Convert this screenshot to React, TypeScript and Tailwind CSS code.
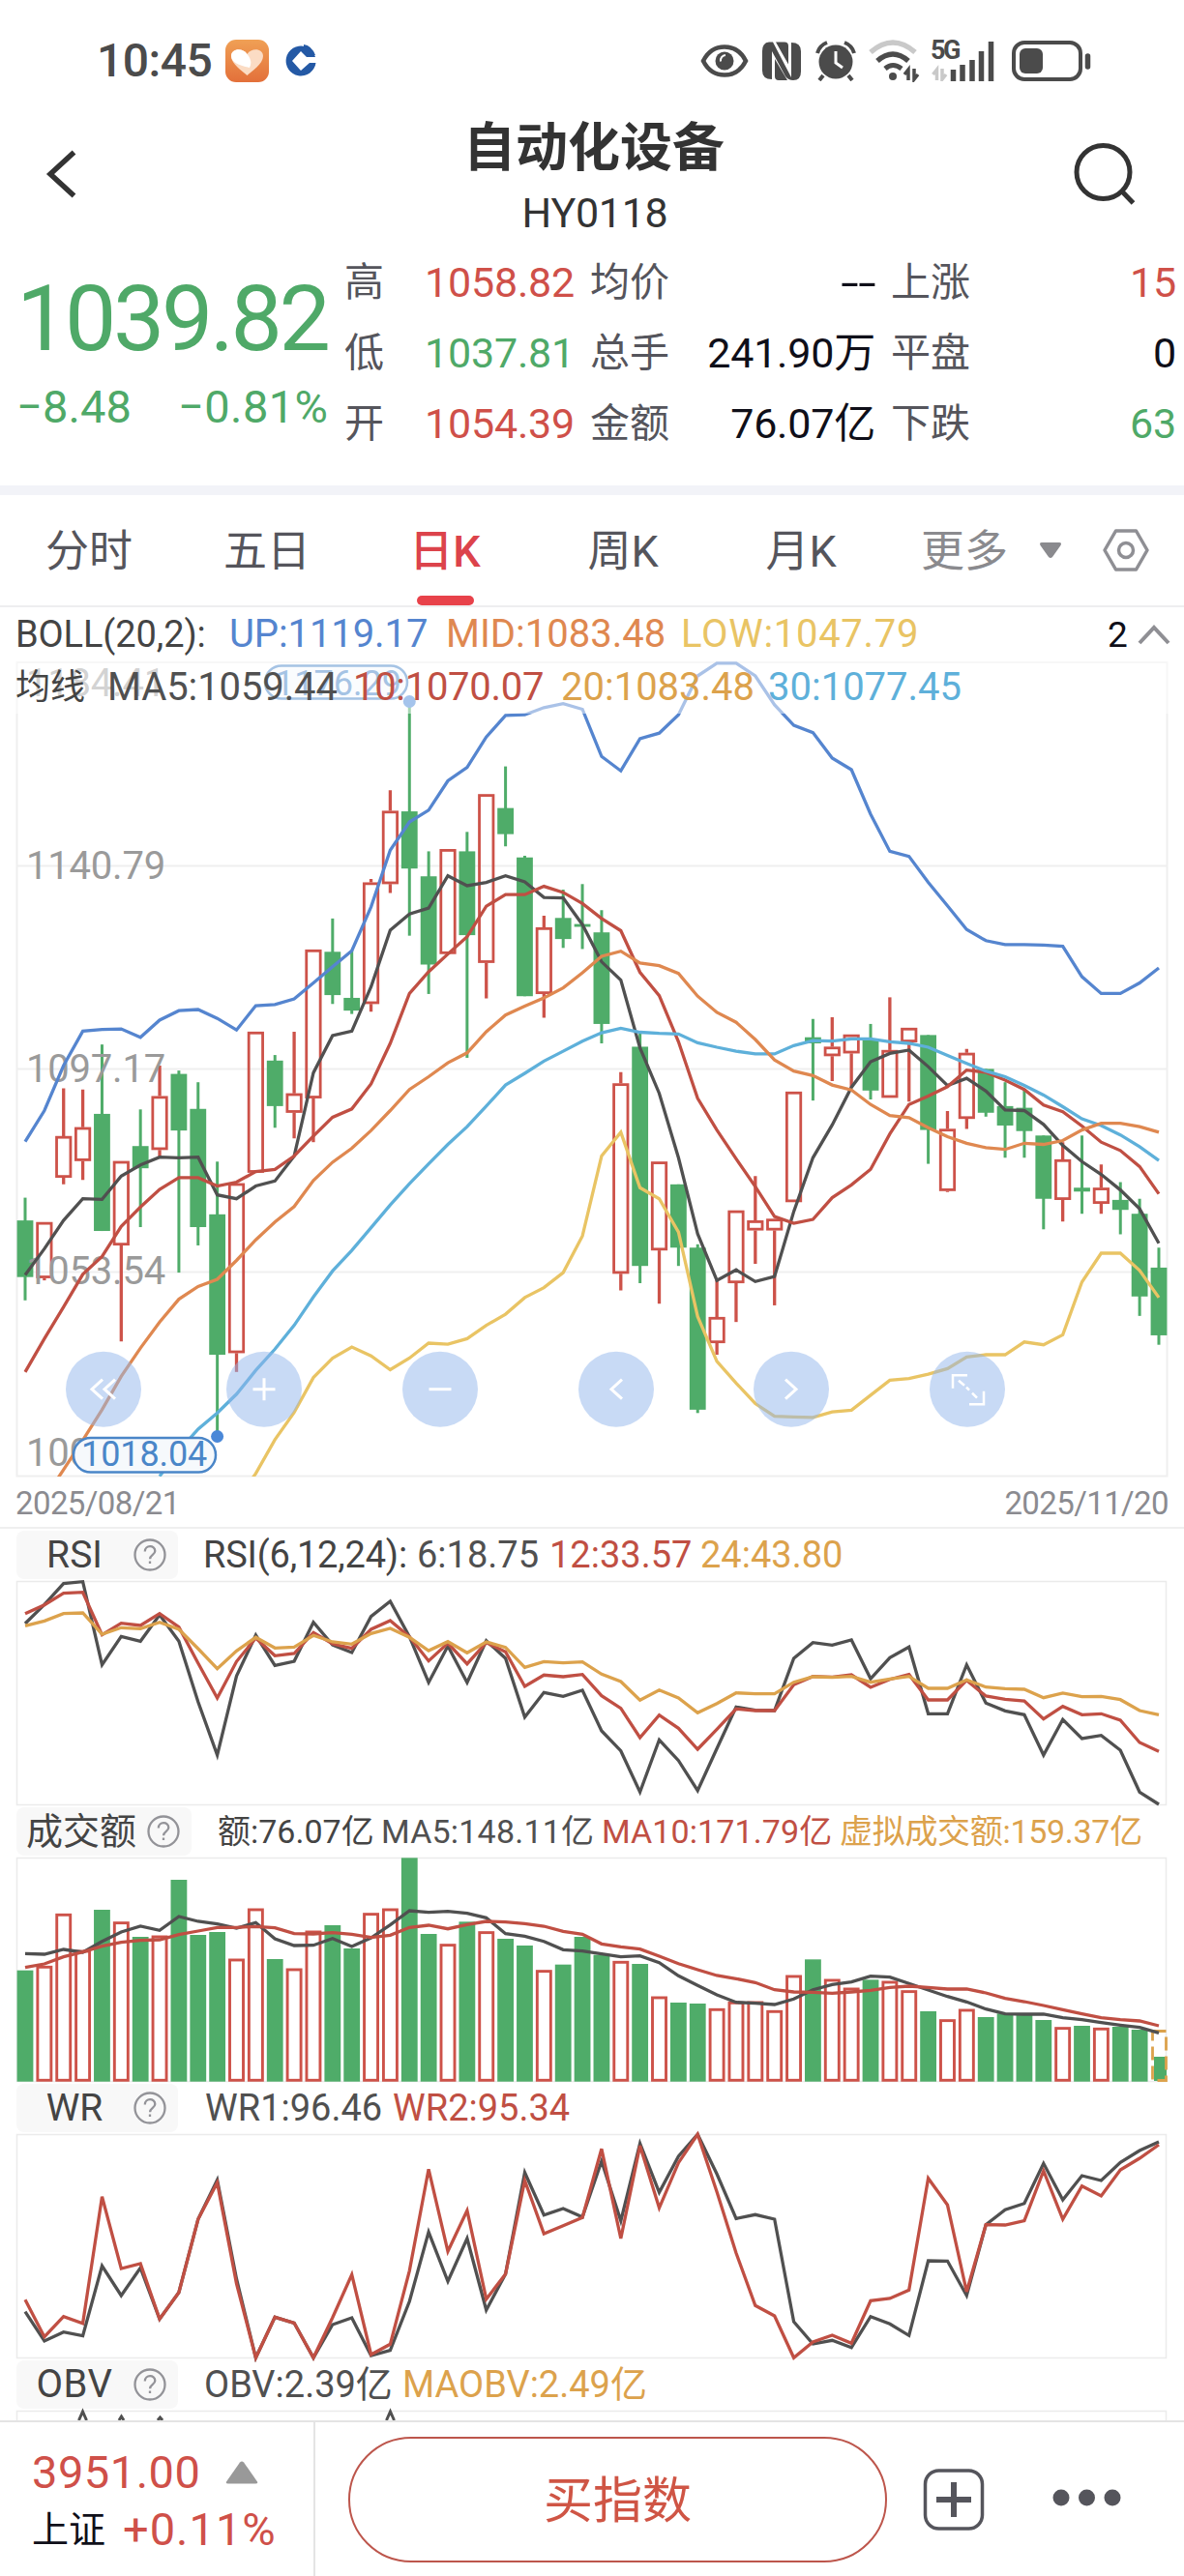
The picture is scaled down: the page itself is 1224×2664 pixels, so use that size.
import type { ReactNode } from "react";

type Candle = [dir: "u" | "d", high: number, top: number, bottom: number, low: number];

// chart units -> px, the price chart uses a finer scale than the indicators
const PRICE_SCALE = 0.574;
const IND_SCALE = 1 / 3;

const xAt = (i: number) => 26 + i * 19.864;

const candles: Candle[] = [
  ["d", 1008, 1049, 1151, 1193], ["u", 1052, 1052, 1153, 1157], ["u", 811, 897, 972, 984],
  ["u", 813, 881, 942, 976], ["d", 732, 857, 1068, 1068], ["u", 942, 942, 1094, 1267],
  ["d", 849, 915, 955, 1061], ["u", 770, 825, 922, 935], ["d", 779, 785, 887, 1143],
  ["d", 800, 848, 1061, 1094], ["d", 943, 1038, 1291, 1438], ["u", 982, 982, 1288, 1322],
  ["u", 709, 709, 963, 963], ["d", 751, 761, 843, 882], ["u", 709, 820, 855, 901],
  ["u", 561, 561, 829, 908], ["d", 505, 565, 643, 659], ["d", 562, 648, 671, 677],
  ["u", 434, 440, 659, 673], ["u", 274, 311, 443, 459], ["d", 115, 312, 415, 536],
  ["d", 384, 429, 588, 641], ["u", 380, 380, 569, 569], ["d", 349, 384, 535, 756],
  ["u", 281, 281, 585, 649], ["d", 231, 306, 353, 375], ["d", 392, 395, 645, 645],
  ["u", 500, 521, 641, 684], ["d", 453, 504, 542, 558], ["d", 443, 515, 520, 560],
  ["d", 490, 530, 695, 730], ["u", 782, 802, 1145, 1175], ["d", 710, 736, 1131, 1162],
  ["u", 943, 943, 1103, 1199], ["d", 984, 984, 1098, 1131], ["d", 1092, 1098, 1390, 1396],
  ["u", 1157, 1223, 1270, 1291], ["u", 1031, 1031, 1162, 1232], ["u", 969, 1049, 1067, 1127],
  ["u", 1046, 1046, 1067, 1202], ["u", 817, 817, 1016, 1016], ["d", 686, 719, 730, 833],
  ["u", 683, 736, 753, 798], ["u", 714, 714, 748, 810], ["d", 695, 722, 815, 831],
  ["u", 647, 742, 828, 828], ["u", 702, 702, 728, 835], ["d", 715, 715, 886, 947],
  ["u", 852, 884, 996, 998], ["u", 740, 747, 866, 884], ["d", 776, 776, 855, 862],
  ["d", 800, 843, 878, 936], ["d", 812, 846, 888, 936], ["d", 896, 896, 1010, 1065],
  ["u", 908, 939, 1012, 1051], ["d", 896, 990, 997, 1037], ["u", 948, 990, 1019, 1037],
  ["d", 980, 1012, 1030, 1074], ["d", 1010, 1037, 1186, 1221], ["d", 1098, 1134, 1256, 1273],
];

const bollUp = [
  907, 851, 770, 708, 705, 704, 719, 688, 671, 669, 685, 706, 662, 660, 650, 621, 592, 563, 484, 382,
  331, 310, 257, 233, 178, 139, 138, 125, 118, 128, 213, 239, 181, 171, 138, 68, 45, 45, 68, 120,
  157, 170, 216, 237, 317, 384, 393, 440, 482, 525, 545, 552, 552, 553, 555, 610, 640, 640, 621, 594,
];
const ma5 = [
  1147, 1100, 1049, 1010, 1011, 969, 949, 935, 936, 935, 1003, 1010, 987, 978, 933, 783, 716, 708, 628, 526,
  497, 486, 428, 446, 440, 428, 439, 467, 468, 516, 583, 616, 738, 820, 936, 1073, 1157, 1138, 1159, 1150,
  1033, 936, 877, 809, 763, 748, 742, 772, 806, 793, 816, 850, 851, 876, 914, 943, 966, 994, 1028, 1090,
];
const ma10 = [
  1322, 1262, 1205, 1146, 1114, 1060, 1025, 993, 972, 972, 987, 980, 961, 957, 933, 897, 863, 848, 803, 730,
  640, 601, 569, 538, 483, 462, 462, 447, 458, 478, 505, 527, 602, 644, 727, 829, 886, 938, 988, 1042,
  1054, 1047, 1008, 985, 957, 893, 840, 825, 808, 778, 782, 796, 813, 841, 853, 879, 908, 923, 952, 1001,
];
const bollMid = [
  1550, 1498, 1445, 1390, 1330, 1279, 1232, 1191, 1168, 1155, 1121, 1084, 1052, 1024, 977, 944, 919, 887, 851,
  813, 790, 765, 747, 709, 679, 663, 648, 630, 603, 573, 564, 585, 590, 604, 645, 674, 692, 723, 760,
  780, 788, 805, 814, 840, 860, 864, 882, 898, 910, 918, 921, 910, 912, 905, 886, 874, 874, 880, 890,
];
const ma30 = [
  1510, 1464, 1425, 1396, 1362, 1319, 1281, 1238, 1187, 1140, 1103, 1062, 1021,
  983, 947, 912, 880, 843, 805, 784, 762, 744, 726, 711, 703, 710, 712, 713, 729, 737, 744, 749, 749,
  734, 725, 726, 722, 722, 727, 730, 737, 752, 766, 780, 790, 806, 823, 844, 866, 878, 895, 916, 941,
];
const bollLow = [
  1554, 1505, 1444, 1395, 1332, 1297, 1277, 1293, 1318,
  1297, 1270, 1272, 1262, 1238, 1218, 1188, 1170, 1143, 1077, 933, 890, 990, 1010, 1070, 1222, 1303, 1342, 1379, 1402,
  1403, 1404, 1394, 1391, 1364, 1337, 1334, 1326, 1316, 1295, 1291, 1291, 1268, 1273, 1255, 1160, 1108, 1108, 1139, 1188,
];

const rsi6 = [
  327, 268, 203, 197, 455, 367, 382, 300, 382, 570, 735, 490, 363, 457, 444, 323, 393, 417, 305, 258,
  368, 510, 397, 510, 380, 435, 617, 541, 553, 534, 660, 722, 850, 688, 752, 845, 715, 586, 596, 597,
  435, 386, 394, 378, 498, 433, 400, 607, 607, 455, 574, 598, 610, 735, 625, 684, 674, 720, 850, 888,
];
const rsi12 = [
  296, 269, 233, 230, 362, 326, 333, 296, 338, 450, 558, 445, 372, 427, 420, 355, 390, 404, 345, 318,
  368, 443, 388, 452, 386, 415, 522, 487, 492, 485, 551, 590, 681, 611, 652, 717, 655, 592, 597, 597,
  517, 491, 493, 486, 525, 500, 485, 564, 564, 503, 552, 562, 567, 623, 584, 610, 607, 627, 696, 724,
];
const rsi24 = [
  334, 319, 296, 294, 360, 340, 343, 323, 345, 405, 467, 412, 370, 403, 400, 364, 384, 391, 358, 342,
  370, 411, 383, 418, 384, 401, 463, 445, 449, 446, 484, 507, 565, 533, 558, 604, 575, 542, 545, 545,
  509, 492, 494, 491, 509, 499, 491, 528, 528, 502, 524, 529, 531, 557, 543, 554, 553, 563, 597, 610,
];

const volTop = [
  503, 489, 327, 440, 315, 352, 399, 395, 222, 393, 384, 467, 311, 468, 497, 380, 363, 435, 325, 311,
  154, 390, 421, 352, 382, 405, 426, 502, 485, 399, 455, 474, 483, 584, 603, 606, 621, 600, 599, 627,
  518, 469, 530, 557, 532, 536, 565, 630, 655, 623, 648, 637, 638, 657, 679, 675, 681, 678, 687,
];
const volMa5 = [
  451, 453, 438, 447, 413, 384, 366, 379, 336, 351, 359, 372, 355, 405, 426, 425, 404, 429, 402, 362,
  318, 323, 320, 326, 340, 389, 397, 413, 439, 443, 452, 461, 458, 479, 520, 550, 579, 602, 605, 609,
  592, 563, 547, 539, 521, 524, 544, 564, 584, 601, 623, 638, 639, 639, 650, 656, 665, 673, 680, 697,
];
const volMa10 = [
  494, 483, 461, 446, 428, 416, 410, 408, 392, 381, 370, 370, 367, 371, 389, 390, 386, 391, 401, 394,
  370, 363, 374, 361, 351, 353, 358, 366, 382, 391, 421, 430, 437, 459, 482, 501, 519, 529, 541, 563,
  570, 571, 574, 570, 565, 556, 552, 556, 561, 561, 573, 590, 600, 612, 625, 638, 650, 656, 660, 675,
];

const wr1 = [
  722, 813, 785, 797, 580, 672, 586, 745, 662, 435, 313, 620, 865, 739, 757, 865, 762, 741, 858, 842,
  690, 475, 628, 495, 717, 605, 290, 422, 402, 428, 255, 440, 200, 352, 240, 172, 295, 433, 421, 435,
  753, 822, 811, 833, 737, 760, 796, 564, 565, 672, 452, 406, 386, 262, 375, 300, 315, 259, 222, 195,
];
const wr2 = [
  685, 800, 737, 758, 365, 588, 573, 745, 662, 435, 322, 635, 865, 739, 757, 865, 740, 607, 855, 823,
  595, 280, 535, 408, 683, 605, 315, 480, 455, 430, 217, 495, 207, 400, 260, 172, 350, 540, 703, 735,
  865, 816, 795, 820, 688, 681, 655, 308, 391, 660, 452, 453, 440, 285, 435, 332, 363, 282, 246, 204,
];

const FONT = "font-[Roboto,'Noto_Sans_CJK_SC',sans-serif]";

function Line({ data, color, scale, start = 0, width = 3.3 }: {
  data: number[];
  color: string;
  scale: number;
  start?: number;
  width?: number;
}) {
  const points = data.map((v, i) => `${xAt(i + start).toFixed(1)},${(v * scale).toFixed(1)}`).join(" ");
  return <polyline points={points} fill="none" stroke={color} strokeWidth={width} strokeLinejoin="miter" />;
}

function StatusBar() {
  return (
    <div className="flex h-[118px] items-center pt-2 pl-[100px] text-[#4b4b4b]">
      <span className="w-[133px] text-[48px] leading-none font-medium tracking-[-0.5px]">10:45</span>
      <svg className="h-[44px] w-[45px]" viewBox="0 0 45 44">
        <defs>
          <linearGradient id="badge" x1="0" y1="0" x2="0" y2="1">
            <stop offset="0" stopColor="#f0a055" />
            <stop offset="1" stopColor="#e3703a" />
          </linearGradient>
        </defs>
        <rect width="45" height="44" rx="11" fill="url(#badge)" />
        <path d="M22.500 37C18 33 6 25 6 17c0-8 12-9 16.500-2C27 8 39 9 39 17c0 8-12 16-16.500 20Z" fill="#fbdcc4" />
        <path d="M25 29C16 27 6 24 6 17c0-8 12-9 16.500-2 4 5 5 9 2.500 14Z" fill="#fff" />
      </svg>
      <svg className="ml-[16px] h-[36px] w-[36px]" viewBox="0 0 36 36">
        <path d="M21 3A15.500 15.500 0 1 0 32.500 20H26L17 28 8 18 17 8l6 6h9Q30 8 26 5Z" fill="#2459a5" />
        <path d="M20 1q8 1 12 11h-4Q25 6 20 4Z" fill="#2459a5" />
        <path d="M17 11l7 7-7 7-7-7Z" fill="#fff" />
      </svg>
      <svg className="ml-[394px] h-[36px] w-[50px]" viewBox="0 0 50 36">
        <path d="M3 18C8 8 16 3.500 25 3.500S42 8 47 18c-5 10-13 14.500-22 14.500S8 28 3 18Z" fill="none" stroke="#4b4b4b" strokeWidth="4.500" />
        <circle cx="25" cy="18" r="9.500" fill="#4b4b4b" />
        <path d="M26 12a5.500 5.500 0 0 0-5 6.500" fill="none" stroke="#fff" strokeWidth="2" />
      </svg>
      <svg className="ml-[13px] h-[42px] w-[42px]" viewBox="0 0 42 42">
        <path d="M8 1.500h4L31 38V2q10 0 10 9v21q0 9-8 9-5 0-8-4L11 11v29Q1 40 1 31V11Q1 2 8 1.500Z" fill="#4b4b4b" />
        <path d="M15 1.500h9q4 0 4 4v19L15 1.500ZM27 41h-9q-4 0-4-4V19l13 22Z" fill="#4b4b4b" />
      </svg>
      <svg className="ml-[14px] h-[42px] w-[42px]" viewBox="0 0 42 42">
        <circle cx="21" cy="22" r="17.500" fill="#4b4b4b" />
        <path d="M2 13Q4 5 12 2M40 13Q38 5 30 2M8 36l-4 5M34 36l4 5" stroke="#4b4b4b" strokeWidth="4" fill="none" />
        <path d="M21 11v12l7 5" stroke="#fff" strokeWidth="3" fill="none" />
      </svg>
      <svg className="ml-[12px] h-[44px] w-[56px]" viewBox="0 0 56 44" fill="none" strokeWidth="5.500">
        <path d="M3 13Q26-7 49 13" stroke="#c9c9c9" />
        <path d="M10 22Q26 8 42 22" stroke="#4b4b4b" />
        <path d="M18 30Q26 23 35 30" stroke="#4b4b4b" strokeWidth="5" />
        <circle cx="26" cy="38" r="4" fill="#4b4b4b" />
        <path d="M42 42V31l-4 5M48 30v11l4-5" stroke="#4b4b4b" strokeWidth="3.500" />
      </svg>
      <div className="relative ml-[9px] h-[42px] w-[68px]">
        <span className="absolute top-0 left-0 text-[27px] leading-[20px] font-bold tracking-[-2.5px]">5G</span>
        <svg className="h-[42px] w-[68px]" viewBox="0 0 68 42">
          <path d="M6.500 41V30l-4 5M12 29v11l4-5" fill="none" stroke="#c9c9c9" strokeWidth="3.500" />
          <path d="M23.500 42V30M33 42V25M43 42V20M52.500 42V11M62.500 42V1" stroke="#4b4b4b" strokeWidth="5.500" />
        </svg>
      </div>
      <svg className="ml-[16px] h-[42px] w-[84px]" viewBox="0 0 84 42">
        <rect x="2" y="2" width="69" height="38" rx="11" fill="none" stroke="#4b4b4b" strokeWidth="4" />
        <rect x="8" y="8" width="24" height="26" rx="6" fill="#4b4b4b" />
        <path d="M78.500 16v11" stroke="#4b4b4b" strokeWidth="5.500" strokeLinecap="round" />
      </svg>
    </div>
  );
}

function Header() {
  return (
    <div className="grid h-[132px] grid-cols-[414px_400px_410px] items-start">
      <svg className="mt-[34px] ml-[44px] h-[56px] w-[40px]" viewBox="0 0 40 56">
        <path d="M32.500 5.500L8 28l24.500 22.500" fill="none" stroke="#333" strokeWidth="5.500" />
      </svg>
      <div className="flex flex-col items-center pt-[9px] text-[#333]">
        <h1 className="text-[54px] leading-[54px] font-bold">自动化设备</h1>
        <div className="mt-[18px] ml-[2px] text-[43px] leading-[43px] tracking-[-0.3px]">HY0118</div>
      </div>
      <svg className="mt-[28px] mr-[44px] h-[72px] w-[72px] justify-self-end" viewBox="0 0 72 72">
        <circle cx="32.500" cy="32" r="27.500" fill="none" stroke="#333" strokeWidth="5" />
        <path d="M51 51l12.500 13" stroke="#333" strokeWidth="5" />
      </svg>
    </div>
  );
}

const stats = [
  [
    { label: "高", value: "1058.82", cls: "text-[#cf5049]" },
    { label: "低", value: "1037.81", cls: "text-[#4fa968]" },
    { label: "开", value: "1054.39", cls: "text-[#cf5049]" },
  ],
  [
    { label: "均价", value: "--", cls: "text-[#0f0f19] scale-x-[1.55] origin-right" },
    { label: "总手", value: "241.90万", cls: "text-[#0f0f19]" },
    { label: "金额", value: "76.07亿", cls: "text-[#0f0f19]" },
  ],
  [
    { label: "上涨", value: "15", cls: "text-[#cf5049]" },
    { label: "平盘", value: "0", cls: "text-[#0f0f19]" },
    { label: "下跌", value: "63", cls: "text-[#4fa968]" },
  ],
];

function Quote() {
  return (
    <div className="flex h-[252px] pt-[6px]">
      <div className="w-[356px] pl-[17px] text-[#4fa968]">
        <div className="mt-[26px] text-[95px] leading-[95px] tracking-[-3.4px]">1039.82</div>
        <div className="mt-[20px] flex text-[47px] leading-[47px] tracking-[0.1px]">
          <span className="w-[167px]">−8.48</span>
          <span className="tracking-[0.4px]">−0.81%</span>
        </div>
      </div>
      <div className="grid grid-cols-[238px_295px_295px] gap-x-4">
        {stats.map((col, c) => (
          <div key={c} className="flex flex-col">
            {col.map((s) => (
              <div key={s.label} className="flex h-[73px] items-center justify-between">
                <span className="text-[41px] leading-none text-[#55555c]">{s.label}</span>
                <span className={`text-[43px] leading-none tracking-[-0.2px] ${s.cls}`}>{s.value}</span>
              </div>
            ))}
          </div>
        ))}
      </div>
    </div>
  );
}

const tabs = ["分时", "五日", "日K", "周K", "月K"];

function Tabs() {
  return (
    <div className="flex h-[116px] items-center border-b-2 border-[#eeeef0] text-[45px] leading-none text-[#55555c]">
      {tabs.map((tab) => (
        <div
          key={tab}
          className={`flex h-full w-[184px] flex-col items-center ${tab === "日K" ? "font-medium text-[#dc434b]" : ""}`}
        >
          <span className="flex-1 content-center pt-[2px]">{tab}</span>
          {tab === "日K" && <span className="-mt-[10px] h-[10px] w-[59px] rounded-full bg-[#e8424a]" />}
        </div>
      ))}
      <span className="ml-[32px] w-[122px] pt-[2px] text-[#8a8a8e]">更多</span>
      <svg className="h-[18px] w-[24px]" viewBox="0 0 24 18">
        <path d="M3 1h18q3 0 1.500 3L14 16q-2 2-4 0L1.500 4Q0 1 3 1Z" fill="#8a8a8e" />
      </svg>
      <svg className="ml-[41px] h-[46px] w-[50px]" viewBox="0 0 50 46" fill="none" stroke="#8f8f94" strokeWidth="3.500">
        <path d="M14.500 3h21L47 23 35.500 43h-21L3 23Z" strokeLinejoin="round" />
        <circle cx="25" cy="23" r="7.500" />
      </svg>
    </div>
  );
}

function BollRow() {
  return (
    <div className="flex h-[56px] items-center text-[40px] leading-none">
      <span className="w-[221px] pl-[16px] text-[38px] tracking-[-0.1px] text-[#444]">BOLL(20,2):</span>
      <span className="ml-[16px] w-[224px] tracking-[-0.1px] text-[#5585cf]">UP:1119.17</span>
      <span className="w-[243px] text-[#df8850]">MID:1083.48</span>
      <span className="w-[441px] tracking-[0.7px] text-[#e9c464]">LOW:1047.79</span>
      <span className="text-[37px] text-[#0f0f19]">2</span>
      <svg className="ml-[9px] h-[24px] w-[36px]" viewBox="0 0 36 24">
        <path d="M3 21L18 5l15 16" fill="none" stroke="#8f8f94" strokeWidth="4" />
      </svg>
    </div>
  );
}

const zoomButtons: { x: number; icon: ReactNode }[] = [
  { x: 107, icon: <path d="M-1-10l-11 10 11 10M12-10L1 0l11 10" /> },
  { x: 273, icon: <path d="M-11.500 0h23M0-11.500v23" /> },
  { x: 455, icon: <path d="M-11.500 0h23" /> },
  { x: 637, icon: <path d="M6-10L-5 0 6 10" /> },
  { x: 818, icon: <path d="M-6-10L5 0-6 10" /> },
  { x: 1000, icon: <path d="M0-14.500h-15V-1M2 15.500h15V2M-9-9l6 5M-1-2l3 3M5 4l5 5" strokeWidth="2.500" /> },
];

function PriceChart() {
  const y = (v: number) => v * PRICE_SCALE;
  return (
    <div className="relative h-[846px]">
      <svg className="block h-[846px] w-full" viewBox="0 24 1224 846">
        <defs>
          <clipPath id="plot">
            <rect x="17" y="24" width="1190" height="843" />
          </clipPath>
        </defs>
        <g stroke="#efefef" strokeWidth="2" fill="none">
          <rect x="17.500" y="25" width="1189" height="841.500" />
          <path d="M18 235.500h1188M18 445.500h1188M18 655.500h1188" />
        </g>
        <g clipPath="url(#plot)">
          {candles.map(([dir, high, top, bottom, low], i) => {
            const x = xAt(i);
            if (dir === "d") {
              return (
                <g key={i} fill="#4fac69">
                  <rect x={x - 1.5} y={y(high)} width="3" height={y(low - high)} />
                  <rect x={x - 8.4} y={y(top)} width="16.800" height={y(bottom - top)} />
                </g>
              );
            }
            return (
              <g key={i} stroke="#cd5249" strokeWidth="2.800" fill="none">
                <path d={`M${x} ${y(high)}V${y(top)}M${x} ${y(bottom)}V${y(low)}`} strokeWidth="3.300" />
                <rect x={x - 7.2} y={y(top) + 1.3} width="14.400" height={Math.max(y(bottom - top) - 2.6, 2)} />
              </g>
            );
          })}
        </g>
        <g fill="#9a9a9a" fontSize="40" fontFamily="Roboto, sans-serif" letterSpacing="-0.2">
          <text x="27" y="60" fillOpacity="0.9">1184.41</text>
          <text x="27" y="248.500">1140.79</text>
          <text x="27" y="458.500">1097.17</text>
          <text x="27" y="668">1053.54</text>
          <text x="27" y="856">1009.92</text>
        </g>
        <g clipPath="url(#plot)">
          <Line data={bollUp} color="#5585cf" scale={PRICE_SCALE} />
          <Line data={ma5} color="#505050" scale={PRICE_SCALE} />
          <Line data={ma10} color="#c04f43" scale={PRICE_SCALE} />
          <Line data={ma30} color="#5eb0da" scale={PRICE_SCALE} start={7} />
          <Line data={bollMid} color="#df8850" scale={PRICE_SCALE} start={1} />
          <Line data={bollLow} color="#e9c464" scale={PRICE_SCALE} start={11} />
        </g>
        <g fontFamily="Roboto, sans-serif" fontSize="36">
          <rect x="274" y="28.500" width="147" height="34" rx="17" fill="#f4f8fc" stroke="#4a86c8" strokeWidth="2.500" />
          <text x="284" y="59" fill="#4a86c8">1176.29</text>
          <circle cx="423.300" cy="65.500" r="6.500" fill="#4a88d8" />
          <rect x="76" y="827" width="147" height="35.500" rx="17.700" fill="#f6f9fc" stroke="#4a86c8" strokeWidth="2.500" />
          <text x="84" y="856" fill="#4a86c8" letterSpacing="-0.1">1018.04</text>
          <circle cx="224.600" cy="825.500" r="6.500" fill="#4a88d8" />
        </g>
        {zoomButtons.map((b) => (
          <g key={b.x} transform={`translate(${b.x} 776.700)`}>
            <circle r="39" fill="#91b5eb" fillOpacity="0.5" />
            <g fill="none" stroke="#fff" strokeWidth="3">{b.icon}</g>
          </g>
        ))}
      </svg>
      <div className="absolute top-0 left-0 flex h-[54px] w-full items-center bg-white/50 text-[40px] leading-none">
        <span className="w-[98px] pl-[16px] text-[36px] text-[#444]">均线</span>
        <span className="ml-[13px] w-[254px] tracking-[-0.1px] text-[#505050]">MA5:1059.44</span>
        <span className="w-[215px] tracking-[-0.3px] text-[#c04f43]">10:1070.07</span>
        <span className="w-[214px] text-[#dca24c]">20:1083.48</span>
        <span className="text-[#5eb0da]">30:1077.45</span>
      </div>
    </div>
  );
}

function HelpIcon() {
  return (
    <svg className="h-[36px] w-[36px]" viewBox="0 0 36 36" fill="none" stroke="#939398" strokeWidth="2.300">
      <circle cx="18" cy="18" r="15.500" />
      <path d="M12.800 14.500c0-7 10.500-7 10.500-.5 0 3.800-5.200 4-5.200 8.200M18 24.500v2.500" />
    </svg>
  );
}

function IndicatorHeader({ name, pill, gap, children }: { name: string; pill: string; gap: string; children: ReactNode }) {
  return (
    <div className="flex h-[54px] items-center pl-[17px]">
      <div className={`flex h-[50px] items-center rounded-lg bg-[#f8f8f8] text-[#444] ${pill}`}>
        <span className="flex-1 text-center leading-none">{name}</span>
        <HelpIcon />
      </div>
      <div className={`flex leading-none whitespace-nowrap ${gap}`}>{children}</div>
    </div>
  );
}

// top edge of the frame, in px of the indicator scale
function IndicatorChart({ top, children }: { top: number; children: ReactNode }) {
  return (
    <svg className="block h-[232px] w-full overflow-visible" viewBox={`0 ${top} 1224 232`}>
      <rect x="17.500" y={top + 0.5} width="1188" height="231" fill="none" stroke="#ebebeb" strokeWidth="1.500" />
      {children}
    </svg>
  );
}

function VolumeBars() {
  return (
    <g>
      {volTop.map((v, i) => {
        const x = xAt(i);
        const top = v * IND_SCALE;
        return candles[i][0] === "d" ? (
          <rect key={i} x={x - 8.4} y={top} width="16.800" height={282.7 - top} fill="#4fac69" />
        ) : (
          <rect key={i} x={x - 7} y={top + 1.3} width="14" height={280 - top} fill="#fff" stroke="#cd5249" strokeWidth="2.900" />
        );
      })}
      <rect x="1193" y="257" width="13" height="25" fill="#4fac69" />
      <rect x="1191.500" y="230.500" width="14" height="51" fill="none" stroke="#dca24c" strokeWidth="2.800" strokeDasharray="14 6" />
    </g>
  );
}

function BottomBar() {
  return (
    <div className="relative flex h-[161px] items-stretch border-t-2 border-[#e4e4e4] bg-white">
      <div className="w-[326px] border-r-2 border-[#e4e4e4] pl-[33px]">
        <div className="mt-[29px] flex items-center text-[47px] leading-[46px] tracking-[0.5px] text-[#cf5049]">
          <span className="w-[200px]">3951.00</span>
          <svg className="h-[24px] w-[34px]" viewBox="0 0 34 24">
            <path d="M15 1.500q2-2 4 0l14 20q1 2-2 2H3q-3 0-2-2Z" fill="#999" />
          </svg>
        </div>
        <div className="mt-[13px] flex items-center text-[47px] leading-[46px] tracking-[1px] text-[#cf5049]">
          <span className="w-[94px] text-[38px] tracking-normal text-[#0f0f19]">上证</span>
          <span>+0.11%</span>
        </div>
      </div>
      <button className="mt-[15px] ml-[34px] h-[130px] w-[557px] rounded-full border-2 border-[#bd564c] pt-[3px] text-[51px] leading-none text-[#cf5545]">
        买指数
      </button>
      <svg className="mt-[47px] ml-[37px] h-[66px] w-[64px]" viewBox="0 0 64 66" fill="none" stroke="#55555c">
        <rect x="2.500" y="3" width="59" height="60" rx="14" strokeWidth="3.500" />
        <path d="M32 15v36M14 33h36" strokeWidth="6" />
      </svg>
      <svg className="mt-[68px] ml-[70px] h-[20px] w-[72px]" viewBox="0 0 72 20" fill="#55555c">
        <circle cx="9" cy="10" r="8.500" />
        <circle cx="35.500" cy="10" r="8.500" />
        <circle cx="62" cy="10" r="8.500" />
      </svg>
    </div>
  );
}

export default function App() {
  return (
    <div className={`h-[2664px] w-[1224px] overflow-hidden bg-white ${FONT}`}>
      <StatusBar />
      <Header />
      <Quote />
      <div className="h-[10px] bg-[#f2f3f8]" />
      <Tabs />
      <BollRow />
      <PriceChart />
      <div className="flex h-[51px] items-center justify-between border-b-2 border-[#efefef] px-[16px] text-[33px] leading-none tracking-[-0.6px] text-[#8b8b90]">
        <span>2025/08/21</span>
        <span>2025/11/20</span>
      </div>

      <IndicatorHeader name="RSI" pill="w-[167px] pr-[11px] text-[39px]" gap="ml-[26px] text-[38px]">
        <span className="w-[221px] tracking-[-0.2px] text-[#444]">RSI(6,12,24):</span>
        <span className="w-[137px] text-[#505050]">6:18.75</span>
        <span className="w-[156px] text-[#c04f43]">12:33.57</span>
        <span className="text-[#dca24c]">24:43.80</span>
      </IndicatorHeader>
      <IndicatorChart top={65}>
        <Line data={rsi6} color="#505050" scale={IND_SCALE} />
        <Line data={rsi12} color="#c04f43" scale={IND_SCALE} />
        <Line data={rsi24} color="#dca24c" scale={IND_SCALE} />
      </IndicatorChart>

      <IndicatorHeader name="成交额" pill="w-[181px] pr-[11px] text-[38px]" gap="ml-[27px] text-[34px]">
        <span className="w-[169px] text-[#444]">额:76.07亿</span>
        <span className="w-[228px] tracking-[0.2px] text-[#505050]">MA5:148.11亿</span>
        <span className="w-[246px] tracking-[0.1px] text-[#c04f43]">MA10:171.79亿</span>
        <span className="tracking-[-0.3px] text-[#dca24c]">虚拟成交额:159.37亿</span>
      </IndicatorHeader>
      <IndicatorChart top={51}>
        <VolumeBars />
        <Line data={volMa5} color="#505050" scale={IND_SCALE} />
        <Line data={volMa10} color="#c04f43" scale={IND_SCALE} />
      </IndicatorChart>

      <IndicatorHeader name="WR" pill="w-[167px] pr-[11px] text-[39px]" gap="ml-[28px] text-[38px]">
        <span className="w-[194px] text-[#505050]">WR1:96.46</span>
        <span className="text-[#c04f43]">WR2:95.34</span>
      </IndicatorHeader>
      <IndicatorChart top={57}>
        <Line data={wr1} color="#505050" scale={IND_SCALE} />
        <Line data={wr2} color="#c04f43" scale={IND_SCALE} />
      </IndicatorChart>

      <IndicatorHeader name="OBV" pill="w-[167px] pr-[11px] text-[40px] tracking-[0.5px]" gap="ml-[27px] text-[38px]">
        <span className="w-[205px] text-[#505050]">OBV:2.39亿</span>
        <span className="text-[#dca24c]">MAOBV:2.49亿</span>
      </IndicatorHeader>
      <svg className="block h-[10px] w-full overflow-visible" viewBox="0 0 1224 10">
        <path d="M17.500 10V0.500H1205.500V10" fill="none" stroke="#ebebeb" strokeWidth="1.500" />
        <path d="M81.500 10L85.500 1l4 9M123 10l2.500-4 2.500 4M163 10l2.500-3 2.500 3M399.500 10l4-9 4 9" fill="none" stroke="#505050" strokeWidth="3" />
      </svg>
      <BottomBar />
    </div>
  );
}
